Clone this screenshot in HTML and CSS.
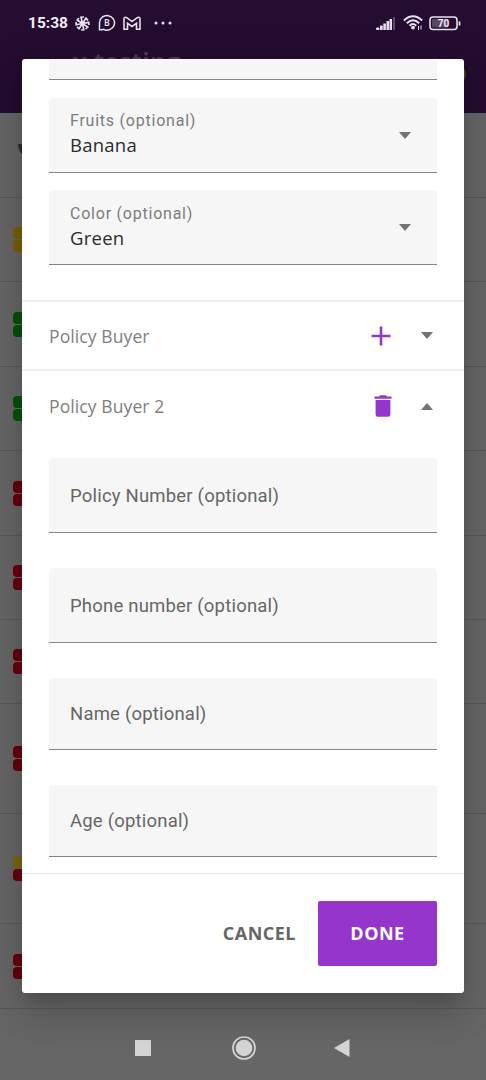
FILE: index.html
```html
<!DOCTYPE html>
<html lang="en">
<head>
<meta charset="utf-8">
<title>Policy form</title>
<link rel="stylesheet" href="styles.css">
</head>
<body>
<div class="screen">
  <header class="appbar">
    <div class="status">
      <span class="clock">15:38</span>
      <svg class="ico-pin" width="15" height="15" viewBox="0 0 15 15"><g stroke="#e8dfee" stroke-width="1.7" fill="none"><path d="M7.5 7.5 6 1.2 9 1M7.5 7.5 11 2.2 13 4.3M7.5 7.5 13.7 6.3 14 9M7.5 7.5 12.7 11 10.6 13M7.5 7.5 8.8 13.8 6 14M7.5 7.5 4 12.7 2 10.8M7.5 7.5 1.2 8.8 1 6M7.5 7.5 2.2 4 4 2"/></g></svg>
      <svg class="ico-b" width="18" height="18" viewBox="0 0 18 18"><path d="M1.500 15.800V8.700a7.500 7.300 0 1 1 4 6.600Q3.500 16 1.500 15.800Z" fill="none" stroke="#e8dfee" stroke-width="1.500"/><text x="9" y="11.900" text-anchor="middle" class="b-letter">B</text></svg>
      <svg class="ico-m" width="18" height="15" viewBox="0 0 18 15"><path d="M1 13.200V3.200Q1 .3 3.800 1.700L9 5.600l5.200-3.900Q17 .3 17 3.200V13.200H13.500V7.300L9 10.500 4.500 7.300V13.200Z" fill="none" stroke="#e8dfee" stroke-width="1.600"/></svg>
      <svg class="ico-dots" width="19" height="4" viewBox="0 0 19 4"><g fill="#e8dfee"><circle cx="2" cy="2" r="1.500"/><circle cx="9" cy="2" r="1.500"/><circle cx="16" cy="2" r="1.500"/></g></svg>
      <span class="grow"></span>
      <svg class="ico-signal" width="20" height="14" viewBox="0 0 20 14"><g fill="#e8dfee"><rect x="0" y="10.500" width="3.500" height="2.500" rx="1"/><rect x="4" y="8.500" width="2.700" height="4.500"/><rect x="7.300" y="6.500" width="2.600" height="6.500"/><rect x="10.500" y="4" width="2.500" height="9"/><rect x="13.500" y="2" width="2.500" height="11"/><rect x="17" y="0" width="2" height="13" opacity=".3"/></g></svg>
      <svg class="ico-wifi" width="20" height="16" viewBox="0 0 20 16"><g fill="none" stroke="#e8dfee" stroke-width="2"><path d="M.9 5.400Q10-2.800 19.100 5.400M3.800 8.200Q10 2.400 16.200 8.200M6.600 10.800Q10 7.400 13.200 10.800"/></g><circle cx="10" cy="12.600" r="1.900" fill="#e8dfee"/><path d="M15.500 11v4M18 10.500v4" stroke="#e8dfee" stroke-width="1"/></svg>
      <svg class="ico-batt" width="32" height="15" viewBox="0 0 32 15"><rect x="1" y="1" width="27" height="12.500" rx="3" fill="none" stroke="#e8dfee" stroke-width="1.600"/><rect x="3" y="3" width="16" height="8.500" rx="1" fill="#584561"/><path d="M30.500 5.500v4" stroke="#e8dfee" stroke-width="1.800"/><text x="14.500" y="10.700" text-anchor="middle" class="batt-num">70</text></svg>
    </div>
    <div class="titlebar"><span>v testing</span><i class="avatar"></i></div>
  </header>
  <ul class="list">
    <li class="row"><svg width="10" height="16" viewBox="0 0 10 16"><path d="M1 1H5Q4 7 10 12V16Q1 10 1 1Z" fill="#303030"/></svg></li>
    <li class="row h84"><i class="pill yellow"></i><i class="pill yellow"></i></li>
    <li class="row"><i class="pill green"></i><i class="pill green"></i></li>
    <li class="row h84"><i class="pill green"></i><i class="pill green"></i></li>
    <li class="row"><i class="pill red"></i><i class="pill red"></i></li>
    <li class="row h84"><i class="pill red"></i><i class="pill red"></i></li>
    <li class="row h84"><i class="pill red"></i><i class="pill red"></i></li>
    <li class="row tall"><i class="pill red"></i><i class="pill red"></i></li>
    <li class="row tall"><i class="pill lime"></i><i class="pill red"></i></li>
    <li class="row"><i class="pill red"></i><i class="pill red"></i></li>
  </ul>
  <nav class="navbar">
    <svg width="16" height="16" viewBox="0 0 16 16"><path d="M0 0H16V16H0Z" fill="#d4d4d4"/></svg>
    <svg width="24" height="24" viewBox="0 0 24 24"><circle cx="12" cy="12" r="11" fill="none" stroke="#d4d4d4" stroke-width="1.700"/><circle cx="12" cy="12" r="8.300" fill="#d4d4d4"/></svg>
    <svg width="16" height="18" viewBox="0 0 16 18"><path d="M0 9 15.500 0V18Z" fill="#d4d4d4"/></svg>
  </nav>

  <section class="dialog">
    <div class="body">
      <div class="field cut"></div>
      <div class="field select"><div><div class="label">Fruits (optional)</div><div class="value">Banana</div></div><i class="caret"></i></div>
      <div class="field select second"><div><div class="label">Color (optional)</div><div class="value">Green</div></div><i class="caret"></i></div>
    </div>
    <div class="section first">
      <span class="name">Policy Buyer</span>
      <svg class="plus" width="20" height="20" viewBox="0 0 20 20"><path d="M10 .5v19M.5 10h19" stroke="#9535cc" stroke-width="2.600"/></svg>
      <i class="caret"></i>
    </div>
    <div class="section open">
      <span class="name">Policy Buyer 2</span>
      <svg class="trash" width="18" height="22" viewBox="0 0 18 22"><path d="M.5 1.500H5L6.200.3h5.600L13 1.500h4.500V3.700H.5ZM1.600 5H16.400V19.500Q16.400 21.700 14.200 21.700H3.800Q1.600 21.700 1.600 19.500Z" fill="#9535cc"/></svg>
      <i class="caret up"></i>
    </div>
    <div class="inputs">
      <div class="field">Policy Number (optional)</div>
      <div class="field">Phone number (optional)</div>
      <div class="field short">Name (optional)</div>
      <div class="field short">Age (optional)</div>
    </div>
    <footer class="actions">
      <button class="cancel">CANCEL</button>
      <button class="done">DONE</button>
    </footer>
  </section>
</div>
</body>
</html>
```
FILE: styles.css
```css
* { box-sizing: border-box; }
body { margin: 0; font-family: "Open Sans", "Noto Sans", sans-serif; }
.screen { position: relative; width: 486px; height: 1080px; background: #666; overflow: hidden; }
svg { display: block; flex: none; }

.appbar { height: 113px; background: #240d30; overflow: hidden; }
.status { display: flex; align-items: center; height: 46px; padding: 0 25px 0 28px; color: #f3edf6; }
.clock { width: 47px; font: 700 15.500px Roboto, sans-serif; white-space: nowrap; }
.ico-b { margin-left: 8px; }
.ico-m { margin-left: 7px; }
.ico-dots { margin-left: 13px; }
.grow { flex: 1; }
.ico-signal { margin-top: 2px; }
.ico-wifi { margin-left: 7px; }
.ico-batt { margin-left: 6px; }
.b-letter { font: 700 8.500px Roboto, sans-serif; fill: #e8dfee; }
.batt-num { font: 700 10px Roboto, sans-serif; fill: #f3edf6; }
.titlebar { display: flex; justify-content: space-between; align-items: center; height: 56px; padding: 0 20px 0 73px; color: #4d3a57; font: 700 24px/30px "Open Sans", sans-serif; }
.titlebar span { align-self: flex-start; letter-spacing: .4px; }
.avatar { width: 20px; height: 20px; border-radius: 50%; background: #4a4820; }

.list { margin: 0; padding: 0; list-style: none; }
.row { display: flex; flex-direction: column; justify-content: center; gap: 1px; height: 85px; padding-left: 13px; border-bottom: 1px solid #585858; }
.row svg { margin: -9px 0 0 4px; }
.h84 { height: 84px; }
.tall { height: 110px; }
.pill { width: 26px; height: 12px; border-radius: 4px; }
.yellow { background: #796000; }
.lime { background: #77690a; }
.green { background: #06520b; }
.red { background: #68000c; }

.navbar { display: flex; align-items: center; justify-content: center; height: 71px; padding: 7px 2px 0 0; gap: 80px; }
.navbar svg:first-child { margin-right: 1px; }
.navbar svg:last-child { margin-left: -2px; }

.dialog { position: absolute; left: 22px; top: 59px; width: 442px; height: 934px; background: #fff; border-radius: 3px; display: flex; flex-direction: column; box-shadow: 0 10px 14px -6px rgba(0,0,0,.16), 0 22px 34px 3px rgba(0,0,0,.1), 0 9px 42px 8px rgba(0,0,0,.08); }
.body { height: 241px; padding: 1px 27px 0; }
.field { display: flex; align-items: center; width: 388px; height: 75px; padding: 0 21px; background: #f6f6f6; border-bottom: 1px solid #858585; border-radius: 4px 4px 0 0; color: #666; font: 400 18.500px Roboto, sans-serif; letter-spacing: .2px; }
.cut { height: 20px; border-radius: 0; }
.select { justify-content: space-between; margin-top: 18px; padding-right: 26px; }
.second { margin-top: 17px; padding-top: 1px; }
.label { color: #7c7c7c; font: 400 16px/20px Roboto, sans-serif; letter-spacing: .77px; white-space: nowrap; }
.value { color: #2b2b2b; font: 400 18.500px/28px "Open Sans", sans-serif; letter-spacing: .25px; }
.caret { width: 0; height: 0; border: 6.500px solid transparent; border-top: 7px solid #737373; border-bottom: 0; }
.up { border-top: 0; border-bottom: 7px solid #737373; }

.section { display: flex; align-items: center; height: 70px; padding: 0 31px 0 27px; border-top: 2px solid #eee; }
.first { height: 69px; }
.open { padding-top: 2px; }
.name { flex: 1; color: #808080; font: 400 17.500px "Open Sans", sans-serif; letter-spacing: .1px; }
.plus { margin-right: 30px; }
.trash { margin-right: 29px; }
.section .caret { margin-right: 0; }

.inputs { display: flex; flex-direction: column; gap: 35px; height: 434px; padding: 19px 27px 0; }
.inputs .field { padding-top: 1px; }
.inputs .short { height: 72px; }
.actions { display: flex; justify-content: flex-end; align-items: center; gap: 22px; height: 120px; padding-right: 27px; border-top: 1px solid #e5e5e5; }
button { border: 0; padding: 0 0 2px; background: none; font: 700 18px "Open Sans", sans-serif; letter-spacing: .5px; }
.cancel { color: #666; }
.done { width: 119px; height: 65px; color: #fff; background: #9535cc; border-radius: 2px; }
```
